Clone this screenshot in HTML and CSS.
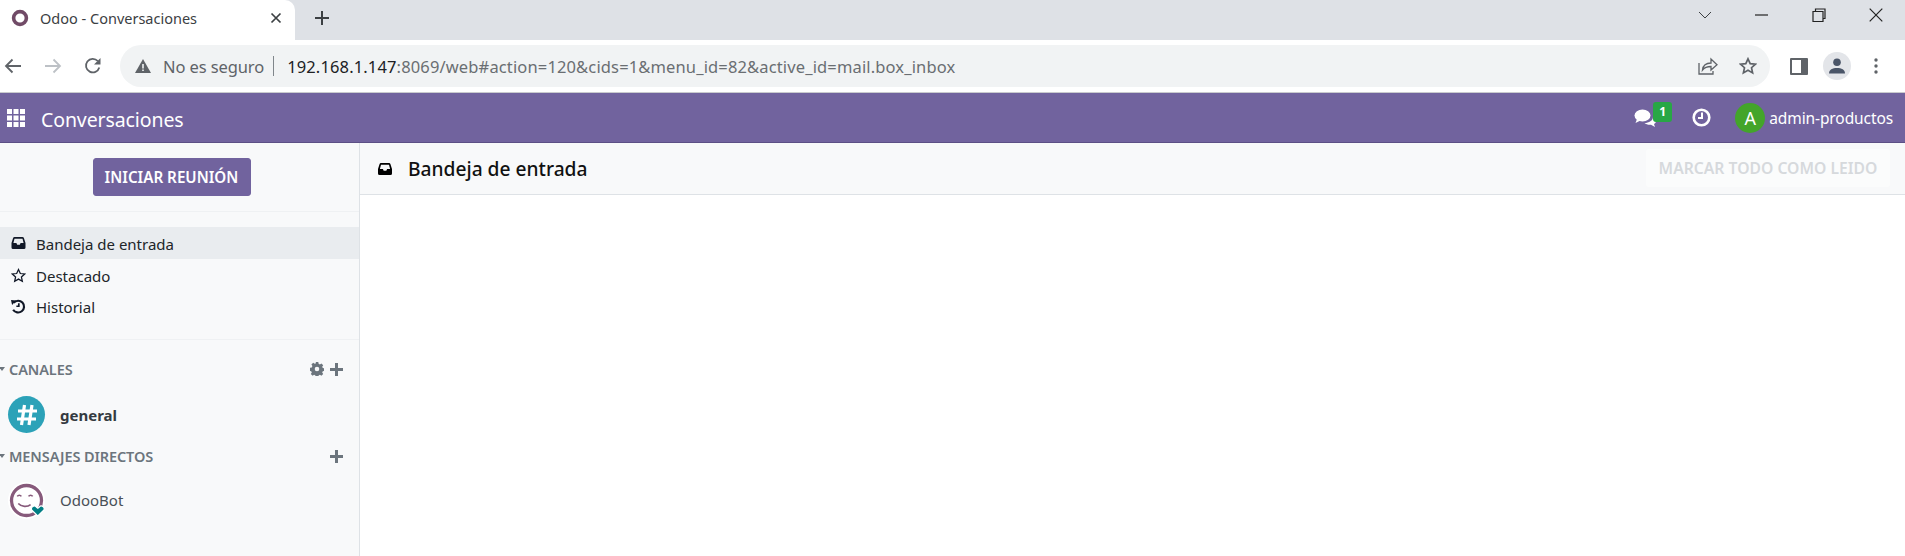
FILE: index.html
```html
<!DOCTYPE html>
<html lang="es">
<head>
  <meta charset="UTF-8" />
  <title>Odoo - Conversaciones</title>
  <link rel="stylesheet" href="styles.css">
</head>
<body>
  <!-- Browser chrome -->
  <div class="tabstrip">
    <div class="tab">
      <svg class="favicon" width="18" height="18" viewBox="0 0 18 18"><circle cx="9" cy="9" r="6.4" fill="none" stroke="#714b67" stroke-width="3.6"/></svg>
      <span class="tab-title">Odoo - Conversaciones</span>
      <svg class="tab-close" width="12" height="12" viewBox="0 0 12 12"><path d="M1.5 1.5l9 9M10.5 1.5l-9 9" stroke="#3c4043" stroke-width="1.7"/></svg>
    </div>
    <svg class="tab-new" width="16" height="16" viewBox="0 0 16 16"><path d="M8 1v14M1 8h14" stroke="#3c4043" stroke-width="2"/></svg>
    <div class="window-btns">
      <svg width="14" height="10" viewBox="0 0 14 10"><path d="M1 2l6 6 6-6" fill="none" stroke="#3c4043" stroke-width="1"/></svg>
      <svg width="14" height="10" viewBox="0 0 14 10"><path d="M0 5h13" stroke="#222" stroke-width="1.2"/></svg>
      <svg width="14" height="14" viewBox="0 0 14 14"><path d="M3.5 3V1h9.5v9.5h-2M1 3.5h10v10H1z" fill="none" stroke="#222" stroke-width="1.2"/></svg>
      <svg width="14" height="14" viewBox="0 0 14 14"><path d="M.7.7l12.6 12.6M13.3.7L.7 13.3" stroke="#222" stroke-width="1.2"/></svg>
    </div>
  </div>

  <div class="toolbar">
    <div class="nav-btns">
      <svg width="18" height="16" viewBox="0 0 18 16"><path d="M17 8H2M8.5 1.5L2 8l6.5 6.5" fill="none" stroke="#5f6368" stroke-width="1.8"/></svg>
      <svg width="18" height="16" viewBox="0 0 18 16"><path d="M1 8h15M9.5 1.5L16 8l-6.5 6.5" fill="none" stroke="#bdc1c6" stroke-width="1.8"/></svg>
      <svg width="18" height="18" viewBox="0 0 18 18"><path d="M15.3 10.5A6.8 6.8 0 1 1 13.8 4" fill="none" stroke="#5f6368" stroke-width="1.8"/><path d="M16.5 1v6.5H10z" fill="#5f6368"/></svg>
    </div>
    <div class="omnibox">
      <svg width="16" height="14" viewBox="0 0 16 14"><path d="M8 0l8 14H0z" fill="#5f6368"/><path d="M7.2 5h1.6v4.500H7.2zM7.2 10.500h1.600V12H7.200z" fill="#f1f3f4"/></svg>
      <span class="insecure">No es seguro</span>
      <span class="omni-sep"></span>
      <span class="url"><span class="url-host">192.168.1.147</span>:8069/web#action=120&amp;cids=1&amp;menu_id=82&amp;active_id=mail.box_inbox</span>
      <div class="omni-icons">
        <svg width="20" height="18" viewBox="0 0 20 18"><path d="M1 6v11h14v-3" fill="none" stroke="#5f6368" stroke-width="1.3"/><path d="M4.5 13c.5-4 3.5-7 8.500-7V2l6 5.800-6 5.200V9.500c-4 0-6.500 1-8.500 3.500z" fill="none" stroke="#5f6368" stroke-width="1.3"/></svg>
        <svg width="18" height="18" viewBox="0 0 18 18"><path d="M9 1.800l2.200 4.800 5.200.6-3.900 3.500 1.100 5.200L9 13.300 4.400 15.900l1.100-5.200-3.900-3.500 5.200-.6z" fill="none" stroke="#5f6368" stroke-width="1.7"/></svg>
      </div>
    </div>
    <div class="toolbar-right">
      <svg width="18" height="17" viewBox="0 0 18 17"><rect width="18" height="17" rx="1" fill="#5f6368"/><rect x="2" y="2" width="9" height="13" fill="#fff"/></svg>
      <span class="profile">
        <svg width="16" height="16" viewBox="0 0 16 16"><circle cx="8" cy="4.300" r="3.800" fill="#4a5568"/><path d="M0 15.500c0-4 3.500-5.500 8-5.500s8 1.500 8 5.500z" fill="#4a5568"/></svg>
      </span>
      <svg width="4" height="16" viewBox="0 0 4 16"><circle cx="2" cy="2" r="1.700" fill="#5f6368"/><circle cx="2" cy="8" r="1.700" fill="#5f6368"/><circle cx="2" cy="14" r="1.700" fill="#5f6368"/></svg>
    </div>
  </div>

  <!-- Odoo navbar -->
  <nav class="navbar">
    <svg class="apps" width="18" height="18" viewBox="0 0 18 18" fill="#fff">
      <rect width="5" height="5"/><rect x="6.500" width="5" height="5"/><rect x="13" width="5" height="5"/>
      <rect y="6.500" width="5" height="5"/><rect x="6.500" y="6.500" width="5" height="5"/><rect x="13" y="6.500" width="5" height="5"/>
      <rect y="13" width="5" height="5"/><rect x="6.500" y="13" width="5" height="5"/><rect x="13" y="13" width="5" height="5"/>
    </svg>
    <span class="brand">Conversaciones</span>
    <div class="systray">
      <span class="messaging">
        <svg width="22" height="18" viewBox="0 0 22 18" fill="#fff"><ellipse cx="8.500" cy="6.500" rx="8" ry="6"/><path d="M3 10l-1.500 4 5-2.500zM19 8c2 1 3 2.500 3 4 0 1.500-1 2.500-2 3l1 3-4-2.300c-2 .3-5-.1-6.500-1.700 4.500 0 8.500-2.500 8.500-6z"/></svg>
        <span class="badge">1</span>
      </span>
      <svg class="activity" width="19" height="19" viewBox="0 0 19 19"><circle cx="9.500" cy="9.500" r="7.800" fill="none" stroke="#fff" stroke-width="2.600"/><path d="M10 4.500v5.500H6" fill="none" stroke="#fff" stroke-width="2"/></svg>
      <span class="user-avatar">A</span>
      <span class="user-name">admin-productos</span>
    </div>
  </nav>

  <div class="discuss">
    <aside class="sidebar">
      <div class="sidebar-start">
        <button class="btn-meeting">INICIAR REUNIÓN</button>
      </div>
      <ul class="mailboxes">
        <li class="mailbox active">
          <svg width="14" height="12" viewBox="0 0 14 12"><path d="M3 0h8a1.500 1.500 0 0 1 1.400 1L14 6v4.500A1.500 1.500 0 0 1 12.500 12h-11A1.500 1.500 0 0 1 0 10.500V6l1.600-5A1.500 1.500 0 0 1 3 0zm0 1.800L1.900 6h3l.8 1.800h2.600L9.100 6h3L11 1.800z" fill="#111827" fill-rule="evenodd"/></svg>
          Bandeja de entrada
        </li>
        <li class="mailbox">
          <svg width="15" height="15" viewBox="0 0 18 18"><path d="M9 1.800l2.200 4.800 5.200.6-3.900 3.500 1.100 5.200L9 13.300 4.400 15.900l1.100-5.200-3.900-3.500 5.200-.6z" fill="none" stroke="#111827" stroke-width="1.500"/></svg>
          Destacado
        </li>
        <li class="mailbox">
          <svg width="15" height="15" viewBox="0 0 14 14"><path d="M2.500 3.500A5.500 5.500 0 1 1 2 10" fill="none" stroke="#111827" stroke-width="2"/><path d="M0 1l4.800 0.500L1 5.500zM6.500 4h1.600v3.500H5V6h1.500z" fill="#111827"/></svg>
          Historial
        </li>
      </ul>
      <div class="category">
        <div class="category-head">
          <span class="caret"></span><span class="category-name">CANALES</span>
          <svg class="gear" width="14" height="14" viewBox="0 0 14 14"><path d="M5.700 0h2.600l.3 1.800 1.300.6 1.500-1 1.800 1.800-1 1.500.6 1.300 1.800.3v2.600l-1.800.3-.6 1.300 1 1.500-1.800 1.800-1.500-1-1.300.6-.3 1.800H5.700l-.3-1.800-1.300-.6-1.500 1L.8 12l1-1.500-.6-1.300L0 8.900V5.700l1.800-.3.600-1.300-1-1.500 1.800-1.800 1.500 1 1.300-.6zM7 4.700a2.300 2.300 0 1 0 0 4.600 2.300 2.300 0 0 0 0-4.600z" fill="#6c757d" fill-rule="evenodd"/></svg>
          <svg class="plus" width="13" height="13" viewBox="0 0 13 13"><path d="M6.500 0v13M0 6.500h13" stroke="#6c757d" stroke-width="3"/></svg>
        </div>
        <div class="channel channel-first">
          <span class="channel-avatar">
            <svg width="24" height="24" viewBox="0 0 24 24"><path d="M9.500 2L6.500 22M17 2l-3 20M3 8h19M2 16h19" stroke="#fff" stroke-width="3.200"/></svg>
          </span>
          <span class="channel-name unread">general</span>
        </div>
      </div>
      <div class="category">
        <div class="category-head">
          <span class="caret"></span><span class="category-name">MENSAJES DIRECTOS</span>
          <svg class="plus" width="13" height="13" viewBox="0 0 13 13"><path d="M6.500 0v13M0 6.500h13" stroke="#6c757d" stroke-width="3"/></svg>
        </div>
        <div class="channel channel-bot">
          <svg class="bot-avatar" width="36" height="36" viewBox="0 0 36 36">
            <circle cx="18" cy="18" r="18" fill="#fff"/>
            <circle cx="18" cy="18" r="14.600" fill="none" stroke="#875a7b" stroke-width="3.200"/>
            <path d="M9 14c1-1.500 3-1.500 4 0M20 14c1-1.500 3-1.500 4 0M10 21c3 3.500 9 3.500 12 1" fill="none" stroke="#875a7b" stroke-width="1.600"/>
            <path d="M29 33l-5.500-5.200c-2.500-2.800 2-6 4-3.500l1.500 1.200 1.500-1.200c2-2.500 6.500.7 4 3.500z" fill="#017e84" stroke="#fff" stroke-width="1.200"/>
          </svg>
          <span class="channel-name">OdooBot</span>
        </div>
      </div>
    </aside>

    <main class="content">
      <header class="content-head">
        <svg width="14" height="12" viewBox="0 0 14 12"><path d="M3 0h8a1.500 1.500 0 0 1 1.400 1L14 6v4.500A1.500 1.500 0 0 1 12.500 12h-11A1.500 1.500 0 0 1 0 10.500V6l1.600-5A1.500 1.500 0 0 1 3 0zm0 1.800L1.900 6h3l.8 1.800h2.600L9.100 6h3L11 1.800z" fill="#000" fill-rule="evenodd"/></svg>
        <h1 class="content-title">Bandeja de entrada</h1>
        <button class="btn-markread">MARCAR TODO COMO LEIDO</button>
      </header>
    </main>
  </div>
</body>
</html>
```

FILE: styles.css
```css
/* Reset */
*, *::before, *::after {
  margin: 0;
  padding: 0;
  box-sizing: border-box;
}
html, body {
  height: 100%;
  overflow: hidden;
}
body {
  font-family: "Noto Sans", "Open Sans", sans-serif;
  background: #fff;
  color: #212529;
  display: flex;
  flex-direction: column;
}
svg {
  display: block;
  flex: none;
}

/* Browser chrome */
.tabstrip {
  height: 40px;
  background: #dee1e6;
  display: flex;
  align-items: center;
}
.tab {
  width: 295px;
  height: 40px;
  background: #fff;
  border-top-right-radius: 10px;
  display: flex;
  align-items: center;
  padding: 0 13px 4px 11px;
}
.tab-title {
  margin-left: 11px;
  font-size: 14.5px;
  color: #3c4043;
  flex: 1;
}
.tab-new {
  margin-left: 19px;
  margin-top: -4px;
}
.window-btns {
  margin-left: auto;
  display: flex;
  align-items: center;
  gap: 43px;
  padding: 0 22px 10px 0;
}
.toolbar {
  height: 53px;
  display: flex;
  align-items: center;
  background: #fff;
  border-bottom: 1px solid #c9cbce;
}
.nav-btns {
  width: 120px;
  padding-left: 4px;
  display: flex;
  align-items: center;
  gap: 22px;
}
.omnibox {
  width: 1650px;
  height: 42px;
  margin-top: -1px;
  background: #f1f3f4;
  border-radius: 21px;
  display: flex;
  align-items: center;
  padding: 0 13px 0 15px;
  font-size: 16.5px;
}
.insecure {
  margin-left: 12px;
  color: #5f6368;
  letter-spacing: -0.1px;
  padding-top: 1px;
}
.omni-sep {
  width: 1px;
  height: 20px;
  background: #80868b;
  margin: 0 13px 0 9px;
}
.url {
  color: #6a6e72;
  white-space: nowrap;
  letter-spacing: 0.14px;
  padding-top: 1px;
}
.url-host {
  color: #202124;
}
.omni-icons {
  margin-left: auto;
  display: flex;
  align-items: center;
  gap: 21px;
}
.toolbar-right {
  flex: 1;
  display: flex;
  align-items: center;
  padding-left: 20px;
}
.profile {
  width: 28px;
  height: 28px;
  border-radius: 50%;
  background: #e3e5e9;
  display: flex;
  align-items: center;
  justify-content: center;
  margin: 0 23px 0 15px;
}

/* Odoo navbar */
.navbar {
  height: 50px;
  background: #71639e;
  border-bottom: 1px solid #5c4f85;
  color: #fff;
  display: flex;
  align-items: center;
  padding: 0 12px 0 7px;
}
.brand {
  margin-left: 16px;
  padding-top: 3px;
  font-size: 19.5px;
  letter-spacing: -0.1px;
}
.systray {
  margin-left: auto;
  display: flex;
  align-items: center;
}
.messaging {
  position: relative;
  margin-right: 36px;
}
.badge {
  position: absolute;
  left: 19px;
  top: -7px;
  width: 19px;
  height: 20px;
  background: #28a745;
  border-radius: 3px;
  font-size: 12px;
  font-weight: 700;
  text-align: center;
  line-height: 19px;
}
.activity {
  margin-right: 24px;
}
.user-avatar {
  width: 30px;
  height: 30px;
  border-radius: 50%;
  background: #43a52a;
  font-size: 18px;
  line-height: 30px;
  text-align: center;
}
.user-name {
  margin-left: 4px;
  padding-top: 1px;
  font-size: 15.5px;
  letter-spacing: -0.1px;
}

/* Discuss */
.discuss {
  flex: 1;
  display: flex;
  min-height: 0;
}
.sidebar {
  width: 360px;
  background: #f8f9fa;
  border-right: 1px solid #dee2e6;
  font-size: 15px;
}
.sidebar-start {
  height: 69px;
  display: flex;
  justify-content: center;
  padding-top: 15px;
  border-bottom: 1px solid #eff1f3;
  padding-right: 16px;
}
.btn-meeting {
  width: 158px;
  height: 38px;
  background: #71639e;
  border: 1px solid #71639e;
  border-radius: 3px;
  color: #fff;
  font-family: inherit;
  font-size: 15.2px;
  font-weight: 600;
}
.mailboxes {
  list-style: none;
  padding: 15px 0 16px;
  border-bottom: 1px solid #eff1f3;
  height: 128px;
  margin-bottom: 16px;
}
.mailbox {
  height: 32px;
  display: flex;
  align-items: center;
  color: #212529;
  padding: 1px 0 0 11px;
}
.mailbox:last-child {
  height: 30px;
}
.mailbox svg {
  width: 15px;
  margin: -1px 10px 0 0;
}
.mailbox.active {
  background: #e9ecef;
}
.category-head {
  height: 26px;
  display: flex;
  align-items: center;
  padding-right: 16px;
  color: #6c757d;
  font-size: 14.5px;
  font-weight: 600;
}
.caret {
  width: 0;
  height: 0;
  border-left: 3px solid transparent;
  border-right: 3px solid transparent;
  border-top: 4px solid #6c757d;
  margin-left: -1px;
  margin-right: 4px;
}
.category-name {
  flex: 1;
  letter-spacing: -0.1px;
}
.gear {
  margin-right: 6px;
}
.channel {
  height: 61px;
  display: flex;
  align-items: center;
  padding-left: 8px;
}
.channel-first {
  padding-top: 4px;
}
.channel-bot {
  padding-top: 1px;
}
.channel-avatar {
  width: 37px;
  height: 37px;
  border-radius: 50%;
  background: #2ca2b8;
  display: flex;
  align-items: center;
  justify-content: center;
}
.bot-avatar {
  width: 37px;
  height: 37px;
}
.channel-name {
  margin-left: 15px;
  color: #495057;
}
.channel-name.unread {
  color: #343a40;
  font-weight: 700;
}
.content {
  flex: 1;
  background: #fff;
}
.content-head {
  height: 52px;
  background: #f8f9fa;
  border-bottom: 1px solid #dee2e6;
  display: flex;
  align-items: center;
  padding: 0 15px 0 18px;
}
.content-title {
  margin-left: 16px;
  font-size: 19.2px;
  font-weight: 500;
  color: #111;
}
.btn-markread {
  margin-left: auto;
  margin-top: -1px;
  width: 244px;
  height: 38px;
  background: #fbfcfc;
  border: none;
  border-radius: 3px;
  color: #d6d9dc;
  font-family: inherit;
  font-size: 15.7px;
  font-weight: 600;
}
```
